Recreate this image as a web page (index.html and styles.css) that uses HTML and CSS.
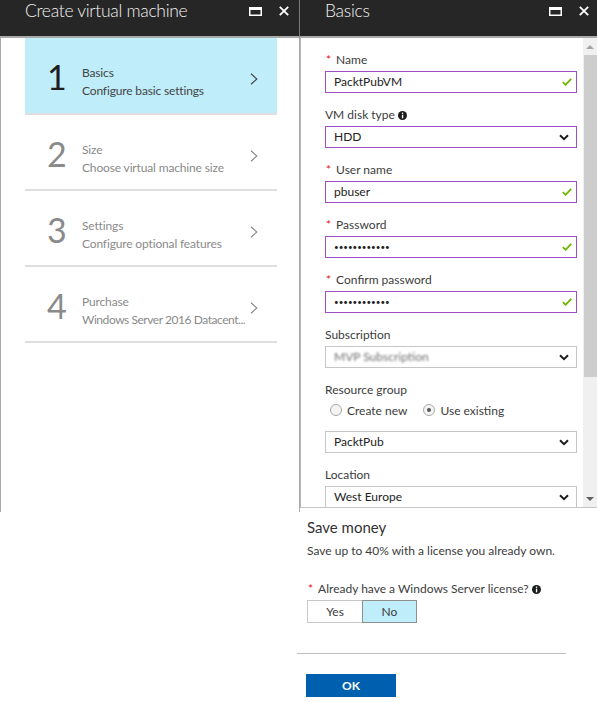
FILE: index.html
```html
<!DOCTYPE html>
<html>
<head>
<meta charset="utf-8">
<title>Create virtual machine</title>
<link rel="stylesheet" href="styles.css">
</head>
<body>
<div class="top">
  <section class="blade blade-left">
    <header class="blade-head head-left">
      <h1 class="blade-title">Create virtual machine</h1>
      <div class="head-icons">
        <svg class="ico-max" width="13" height="9" viewBox="0 0 13 9"><rect x="0.75" y="0.75" width="11.5" height="7.5" fill="none" stroke="#fff" stroke-width="1.5"/><rect x="0" y="0" width="13" height="3" fill="#fff"/></svg>
        <svg class="ico-close" width="10" height="10" viewBox="0 0 10 10"><path d="M0.8 0.8 L9.2 9.2 M9.2 0.8 L0.8 9.2" stroke="#fff" stroke-width="1.8" fill="none"/></svg>
      </div>
    </header>
    <div class="blade-body steps">
      <div class="step step-active">
        <div class="step-num">1</div>
        <div class="step-text"><div>Basics</div><div>Configure basic settings</div></div>
        <svg class="step-chev" width="8" height="12" viewBox="0 0 8 12"><path d="M1 0.8 L6.8 6 L1 11.2" fill="none" stroke="currentColor" stroke-width="1.2"/></svg>
      </div>
      <div class="step">
        <div class="step-num">2</div>
        <div class="step-text"><div>Size</div><div>Choose virtual machine size</div></div>
        <svg class="step-chev" width="8" height="12" viewBox="0 0 8 12"><path d="M1 0.8 L6.8 6 L1 11.2" fill="none" stroke="currentColor" stroke-width="1.2"/></svg>
      </div>
      <div class="step">
        <div class="step-num">3</div>
        <div class="step-text"><div>Settings</div><div>Configure optional features</div></div>
        <svg class="step-chev" width="8" height="12" viewBox="0 0 8 12"><path d="M1 0.8 L6.8 6 L1 11.2" fill="none" stroke="currentColor" stroke-width="1.2"/></svg>
      </div>
      <div class="step">
        <div class="step-num">4</div>
        <div class="step-text"><div>Purchase</div><div class="tight">Windows Server 2016 Datacent...</div></div>
        <svg class="step-chev" width="8" height="12" viewBox="0 0 8 12"><path d="M1 0.8 L6.8 6 L1 11.2" fill="none" stroke="currentColor" stroke-width="1.2"/></svg>
      </div>
    </div>
  </section>

  <section class="blade blade-right">
    <header class="blade-head head-right">
      <h1 class="blade-title">Basics</h1>
      <div class="head-icons">
        <svg class="ico-max" width="13" height="9" viewBox="0 0 13 9"><rect x="0.75" y="0.75" width="11.5" height="7.5" fill="none" stroke="#fff" stroke-width="1.5"/><rect x="0" y="0" width="13" height="3" fill="#fff"/></svg>
        <svg class="ico-close" width="10" height="10" viewBox="0 0 10 10"><path d="M0.8 0.8 L9.2 9.2 M9.2 0.8 L0.8 9.2" stroke="#fff" stroke-width="1.8" fill="none"/></svg>
      </div>
    </header>
    <div class="blade-body form-wrap">
      <div class="form">
        <div class="field">
          <div class="label"><span class="req">*</span>Name</div>
          <div class="control dirty"><span class="val">PacktPubVM</span><svg class="check" width="10" height="8" viewBox="0 0 10 8"><path d="M0.8 4.2 L3.6 6.8 L9.2 0.8" fill="none" stroke="#6cb600" stroke-width="1.8"/></svg></div>
        </div>
        <div class="field">
          <div class="label">VM disk type <svg class="info" width="9" height="9" viewBox="0 0 9 9"><circle cx="4.5" cy="4.5" r="4.5" fill="#1e1e1e"/><rect x="3.9" y="3.7" width="1.3" height="3.6" fill="#fff"/><rect x="3.9" y="1.6" width="1.3" height="1.3" fill="#fff"/></svg></div>
          <div class="control dirty"><span class="val">HDD</span><svg class="chev-down" width="10" height="7" viewBox="0 0 10 7"><path d="M1 1.2 L5 5.2 L9 1.2" fill="none" stroke="#1e1e1e" stroke-width="2"/></svg></div>
        </div>
        <div class="field">
          <div class="label"><span class="req">*</span>User name</div>
          <div class="control dirty"><span class="val">pbuser</span><svg class="check" width="10" height="8" viewBox="0 0 10 8"><path d="M0.8 4.2 L3.6 6.8 L9.2 0.8" fill="none" stroke="#6cb600" stroke-width="1.8"/></svg></div>
        </div>
        <div class="field">
          <div class="label"><span class="req">*</span>Password</div>
          <div class="control dirty"><span class="val dots">••••••••••••</span><svg class="check" width="10" height="8" viewBox="0 0 10 8"><path d="M0.8 4.2 L3.6 6.8 L9.2 0.8" fill="none" stroke="#6cb600" stroke-width="1.8"/></svg></div>
        </div>
        <div class="field">
          <div class="label"><span class="req">*</span>Confirm password</div>
          <div class="control dirty"><span class="val dots">••••••••••••</span><svg class="check" width="10" height="8" viewBox="0 0 10 8"><path d="M0.8 4.2 L3.6 6.8 L9.2 0.8" fill="none" stroke="#6cb600" stroke-width="1.8"/></svg></div>
        </div>
        <div class="field">
          <div class="label">Subscription</div>
          <div class="control"><span class="val blurred">MVP Subscription</span><svg class="chev-down" width="10" height="7" viewBox="0 0 10 7"><path d="M1 1.2 L5 5.2 L9 1.2" fill="none" stroke="#1e1e1e" stroke-width="2"/></svg></div>
        </div>
        <div class="field">
          <div class="label">Resource group</div>
          <div class="radios">
            <span class="radio"><span class="radio-dot"></span>Create new</span>
            <span class="radio radio-on"><span class="radio-dot"></span>Use existing</span>
          </div>
          <div class="control"><span class="val">PacktPub</span><svg class="chev-down" width="10" height="7" viewBox="0 0 10 7"><path d="M1 1.2 L5 5.2 L9 1.2" fill="none" stroke="#1e1e1e" stroke-width="2"/></svg></div>
        </div>
        <div class="field">
          <div class="label">Location</div>
          <div class="control"><span class="val">West Europe</span><svg class="chev-down" width="10" height="7" viewBox="0 0 10 7"><path d="M1 1.2 L5 5.2 L9 1.2" fill="none" stroke="#1e1e1e" stroke-width="2"/></svg></div>
        </div>
      </div>
      <div class="scrollbar">
        <div class="sb-btn"><span class="tri-up"></span></div>
        <div class="sb-thumb"></div>
        <div class="sb-track"></div>
        <div class="sb-btn"><span class="tri-down"></span></div>
      </div>
    </div>
  </section>
</div>

<div class="bottom">
  <div class="bottom-inner">
    <div class="save-title">Save money</div>
    <div class="save-text">Save up to 40% with a license you already own.</div>
    <div class="label lic-label"><span class="req">*</span>Already have a Windows Server license? <svg class="info" width="9" height="9" viewBox="0 0 9 9"><circle cx="4.5" cy="4.5" r="4.5" fill="#1e1e1e"/><rect x="3.9" y="3.7" width="1.3" height="3.6" fill="#fff"/><rect x="3.9" y="1.6" width="1.3" height="1.3" fill="#fff"/></svg></div>
    <div class="toggle">
      <span class="tog tog-yes">Yes</span>
      <span class="tog tog-no">No</span>
    </div>
  </div>
  <div class="divider"></div>
  <div class="bottom-inner">
    <button class="ok-btn">OK</button>
  </div>
</div>
</body>
</html>
```

FILE: styles.css
```css
* { box-sizing: border-box; }
html, body { margin: 0; padding: 0; background: #fff; }
body {
  width: 597px;
  font-family: "Lato", "Noto Sans", "Liberation Sans", sans-serif;
  font-size: 12px;
  color: #3c3c3c;
}

.top {
  display: flex;
  height: 512px;
}

.blade-left { width: 300px; }
.blade-right { width: 297px; }

.blade-head {
  height: 38px;
  background: #262626;
  border-bottom: 2px solid #a9a9a9;
  display: flex;
  justify-content: space-between;
  align-items: flex-start;
  padding-left: 25px;
}
.head-left { border-right: 1px solid #7a7a7a; padding-right: 10px; }
.head-right { padding-right: 8px; }

.blade-title {
  margin: 0;
  font-size: 17.5px;
  letter-spacing: -0.3px;
  line-height: 22px;
  font-weight: 300;
  color: #f2f2f2;
}

.head-icons {
  display: flex;
  align-items: flex-start;
  gap: 17px;
  padding-top: 6px;
}
.ico-max { margin-top: 1px; display: block; }
.ico-close { display: block; }

/* Steps */
.steps {
  height: 474px;
  border-left: 1px solid #a8a8a8;
  border-right: 1px solid #a8a8a8;
  padding: 0 22px 0 24px;
}
.step {
  display: flex;
  align-items: flex-start;
  height: 76px;
  padding: 26px 0 0 22px;
  border-bottom: 2px solid #dedede;
  color: #8a8a8a;
}
.step-active {
  height: 77px;
  background: #bfedf9;
  color: #444;
}
.step-num {
  flex: 0 0 35px;
  font-size: 34px;
  line-height: 34px;
  font-weight: 400;
  margin-top: -4px;
  color: #8a8a8a;
}
.step-active .step-num { color: #1e1e1e; }
.step-text {
  flex: 1;
  min-width: 0;
  line-height: 18px;
  white-space: nowrap;
  letter-spacing: -0.15px;
}
.step-text .tight { letter-spacing: -0.45px; }
.step-chev {
  flex: 0 0 8px;
  margin: 9px 19px 0 0;
  display: block;
}

/* Right form */
.form-wrap {
  display: flex;
  height: 470px;
  border-left: 1px solid #b8b8b8;
  border-bottom: 1px solid #c4c4c4;
}
.form {
  flex: 1;
  padding: 14px 6px 0 24px;
  overflow: hidden;
}
.field { margin-bottom: 14px; }
.label {
  line-height: 16px;
  margin-bottom: 3px;
  color: #3c3c3c;
  white-space: nowrap;
}
.req {
  color: #e81123;
  margin-right: 5px;
  margin-left: 1px;
}
.info { vertical-align: -1px; }

.control {
  height: 22px;
  border: 1px solid #c6c6c6;
  display: flex;
  align-items: center;
  justify-content: space-between;
  padding: 0 8px 0 8px;
  color: #222;
  background: #fff;
}
.control.dirty { border-color: #9b4fc4; }
.val { line-height: 16px; }
.dots { font-size: 8px; letter-spacing: 0; }
.blurred { color: #6e6e6e; filter: blur(1.3px); }
.check { display: block; margin-right: -4px; }
.chev-down { display: block; margin-right: -1px; }

.radios {
  display: flex;
  height: 18px;
  align-items: center;
  margin-bottom: 12px;
  padding-left: 5px;
  gap: 16px;
}
.radio {
  display: flex;
  align-items: center;
  gap: 5px;
  color: #3c3c3c;
}
.radio-dot {
  width: 12px;
  height: 12px;
  border-radius: 50%;
  border: 1px solid #a9a9a9;
  background: #f4f4f4;
  position: relative;
}
.radio-on .radio-dot::after {
  content: "";
  position: absolute;
  left: 3px;
  top: 3px;
  width: 4px;
  height: 4px;
  border-radius: 50%;
  background: #555;
}

.scrollbar {
  width: 14px;
  display: flex;
  flex-direction: column;
  background: #f0f0f0;
}
.sb-btn {
  height: 17px;
  display: flex;
  align-items: center;
  justify-content: center;
}
.sb-thumb {
  height: 322px;
  background: #cdcdcd;
  margin-left: 1px;
}
.sb-track { flex: 1; }
.tri-up {
  width: 0; height: 0;
  border-left: 4px solid transparent;
  border-right: 4px solid transparent;
  border-bottom: 4px solid #a3a3a3;
}
.tri-down {
  width: 0; height: 0;
  border-left: 4px solid transparent;
  border-right: 4px solid transparent;
  border-top: 4px solid #606060;
}

/* Bottom section */
.bottom {
  margin-left: 297px;
  width: 269px;
}
.bottom-inner { padding-left: 10px; }
.save-title {
  padding-top: 5px;
  font-size: 15px;
  line-height: 20px;
  color: #333;
}
.save-text {
  margin-top: 6px;
  line-height: 16px;
  color: #3c3c3c;
}
.lic-label { margin-top: 22px; }
.toggle {
  display: flex;
  height: 23px;
}
.tog {
  display: flex;
  align-items: center;
  justify-content: center;
  height: 23px;
  color: #3c3c3c;
}
.tog-yes {
  width: 55px;
  border: 1px solid #c8c8c8;
  border-right: none;
}
.tog-no {
  width: 55px;
  background: #bfedf9;
  border: 1px solid #8f8f8f;
}
.divider {
  margin-top: 30px;
  height: 1px;
  background: #bdbdbd;
}
.ok-btn {
  margin: 20px 0 0 -1px;
  width: 90px;
  height: 23px;
  border: none;
  background: #0060b0;
  color: #fff;
  font-family: inherit;
  font-size: 12px;
  font-weight: bold;
  padding: 0;
}
```
